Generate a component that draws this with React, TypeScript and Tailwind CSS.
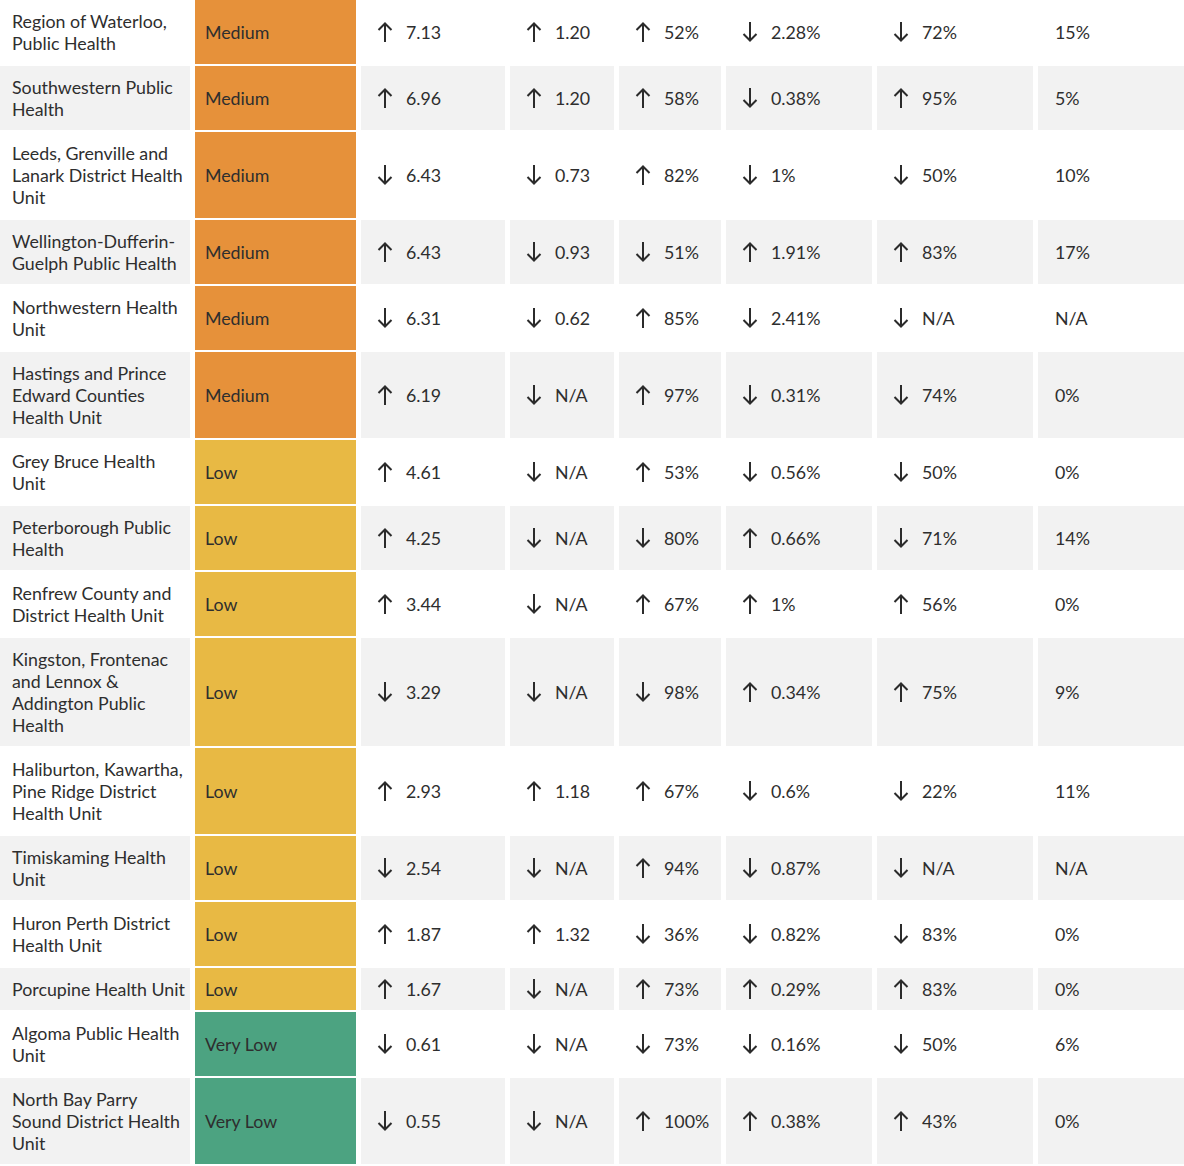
import React from "react";

type Dir = "up" | "down" | null;
type Cell = [Dir, string];
type Row = { name: string; level: "Medium" | "Low" | "Very Low"; cells: Cell[]; last: string };

const u = (v: string): Cell => ["up", v];
const d = (v: string): Cell => ["down", v];

const rows: Row[] = [
  { name: "Region of Waterloo, Public Health", level: "Medium", cells: [u("7.13"), u("1.20"), u("52%"), d("2.28%"), d("72%")], last: "15%" },
  { name: "Southwestern Public Health", level: "Medium", cells: [u("6.96"), u("1.20"), u("58%"), d("0.38%"), u("95%")], last: "5%" },
  { name: "Leeds, Grenville and Lanark District Health Unit", level: "Medium", cells: [d("6.43"), d("0.73"), u("82%"), d("1%"), d("50%")], last: "10%" },
  { name: "Wellington-Dufferin-Guelph Public Health", level: "Medium", cells: [u("6.43"), d("0.93"), d("51%"), u("1.91%"), u("83%")], last: "17%" },
  { name: "Northwestern Health Unit", level: "Medium", cells: [d("6.31"), d("0.62"), u("85%"), d("2.41%"), d("N/A")], last: "N/A" },
  { name: "Hastings and Prince Edward Counties Health Unit", level: "Medium", cells: [u("6.19"), d("N/A"), u("97%"), d("0.31%"), d("74%")], last: "0%" },
  { name: "Grey Bruce Health Unit", level: "Low", cells: [u("4.61"), d("N/A"), u("53%"), d("0.56%"), d("50%")], last: "0%" },
  { name: "Peterborough Public Health", level: "Low", cells: [u("4.25"), d("N/A"), d("80%"), u("0.66%"), d("71%")], last: "14%" },
  { name: "Renfrew County and District Health Unit", level: "Low", cells: [u("3.44"), d("N/A"), u("67%"), u("1%"), u("56%")], last: "0%" },
  { name: "Kingston, Frontenac and Lennox & Addington Public Health", level: "Low", cells: [d("3.29"), d("N/A"), d("98%"), u("0.34%"), u("75%")], last: "9%" },
  { name: "Haliburton, Kawartha, Pine Ridge District Health Unit", level: "Low", cells: [u("2.93"), u("1.18"), u("67%"), d("0.6%"), d("22%")], last: "11%" },
  { name: "Timiskaming Health Unit", level: "Low", cells: [d("2.54"), d("N/A"), u("94%"), d("0.87%"), d("N/A")], last: "N/A" },
  { name: "Huron Perth District Health Unit", level: "Low", cells: [u("1.87"), u("1.32"), d("36%"), d("0.82%"), d("83%")], last: "0%" },
  { name: "Porcupine Health Unit", level: "Low", cells: [u("1.67"), d("N/A"), u("73%"), u("0.29%"), u("83%")], last: "0%" },
  { name: "Algoma Public Health Unit", level: "Very Low", cells: [d("0.61"), d("N/A"), d("73%"), d("0.16%"), d("50%")], last: "6%" },
  { name: "North Bay Parry Sound District Health Unit", level: "Very Low", cells: [d("0.55"), d("N/A"), u("100%"), u("0.38%"), u("43%")], last: "0%" },
];

function Arrow({ dir }: { dir: "up" | "down" }) {
  return (
    <svg width="16" height="22" viewBox="0 0 16 22" className="shrink-0" fill="none" stroke="#2b2b2b" strokeWidth="2" strokeLinecap="butt" strokeLinejoin="miter">
      {dir === "up" ? (
        <g>
          <path d="M8 2.5 V21" />
          <path d="M1.5 9 L8 2.5 L14.5 9" />
        </g>
      ) : (
        <g>
          <path d="M8 1 V19.5" />
          <path d="M1.5 13 L8 19.5 L14.5 13" />
        </g>
      )}
    </svg>
  );
}

export default function App() {
  return (
    <div
      className="w-[1184px] h-[1166px] bg-white text-[#2e2e2e] text-[17.8px] leading-[22px]"
      style={{ fontFamily: "Lato, 'Noto Sans', sans-serif" }}
    >
      <div className="grid grid-cols-[190px_161px_144px_104px_102px_146px_156px_146px] gap-x-[5px] gap-y-[2px]">
        {rows.map((r, i) => {
          const bg = i % 2 === 1 ? "bg-[#f2f2f2]" : "bg-white";
          const lv =
            r.level === "Medium" ? "bg-[#e6913a]" : r.level === "Low" ? "bg-[#e8b944]" : "bg-[#4ca381]";
          return (
            <React.Fragment key={i}>
              <div className={`${bg} pl-3 pr-[2px] py-[10px] flex items-center`}>{r.name}</div>
              <div className={`${lv} pl-[10px] py-[10px] flex items-center`}>{r.level}</div>
              {r.cells.map((c, j) => (
                <div key={j} className={`${bg} pl-[16px] py-[10px] flex items-center gap-[13px]`}>
                  {c[0] && <Arrow dir={c[0]} />}
                  <span>{c[1]}</span>
                </div>
              ))}
              <div className={`${bg} pl-[17px] py-[10px] flex items-center`}>{r.last}</div>
            </React.Fragment>
          );
        })}
      </div>
    </div>
  );
}
